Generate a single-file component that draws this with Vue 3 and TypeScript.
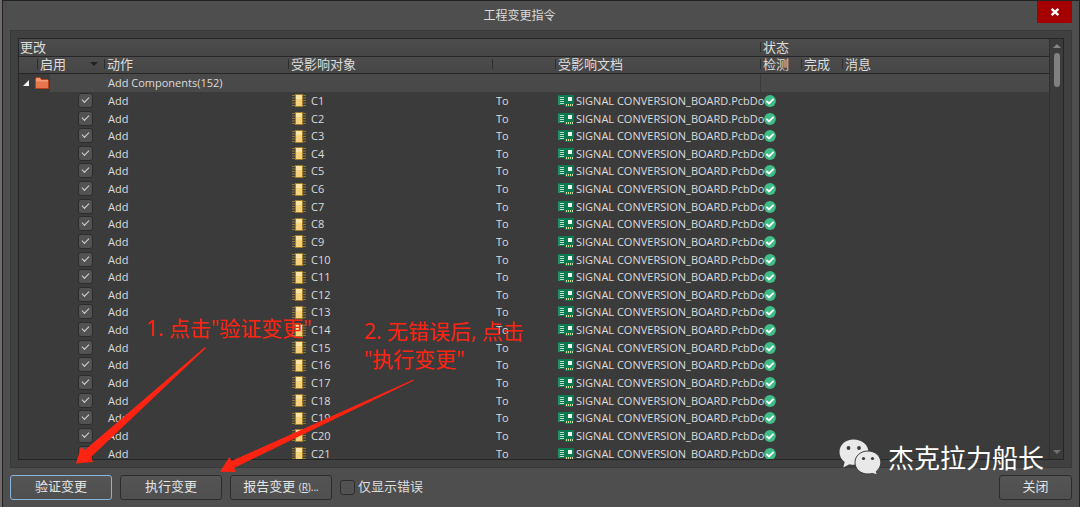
<script setup lang="ts">
import { ref } from 'vue'

interface Change {
  id: string
  enabled: boolean
}

const documentName = 'SIGNAL CONVERSION_BOARD.PcbDo'
const changes = ref<Change[]>(
  Array.from({ length: 21 }, (_, i) => ({ id: `C${i + 1}`, enabled: true })),
)
const errorsOnly = ref(false)
</script>

<template>
  <div class="dialog">
    <header class="titlebar">
      <h1>工程变更指令</h1>
      <button class="close" type="button" aria-label="Close">
        <svg width="10" height="10" viewBox="0 0 10 10"><path d="M1.6 1.8 8.4 8.2M8.4 1.8 1.6 8.2" stroke="#fff" stroke-width="2.4" /></svg>
      </button>
    </header>

    <main class="panel">
      <div class="list">
        <div class="rows">
          <table>
            <colgroup>
              <col class="c-enable" /><col class="c-action" /><col class="c-object" /><col class="c-to" />
              <col class="c-doc" /><col class="c-flag" /><col class="c-flag" /><col />
            </colgroup>
            <thead>
              <tr class="bands">
                <th colspan="5" scope="colgroup">更改</th>
                <th colspan="3" scope="colgroup"><span class="sep">状态</span></th>
              </tr>
              <tr class="heads">
                <th scope="col" class="enable">
                  <div class="sort">
                    <span class="sep">启用</span>
                    <svg width="8" height="4" viewBox="0 0 8 4"><path d="M0 0H8L4 4Z" fill="#222" /></svg>
                  </div>
                </th>
                <th scope="col"><span class="sep">动作</span></th>
                <th scope="col"><span class="sep">受影响对象</span></th>
                <th><span class="sep"></span></th>
                <th scope="col"><span class="sep">受影响文档</span></th>
                <th scope="col"><span class="sep">检测</span></th>
                <th scope="col"><span class="sep">完成</span></th>
                <th scope="col"><span class="sep">消息</span></th>
              </tr>
            </thead>
            <tbody>
              <tr class="group">
                <td class="tree">
                  <div class="node">
                    <svg width="6" height="6" viewBox="0 0 6 6"><path d="M6 0V6H0Z" fill="#f4f4f4" /></svg>
                    <svg width="14" height="12" viewBox="0 0 14 12">
                      <path d="M.5 11.5V1.5L1.5.5H5L6.5 2.5H12.5L13.5 3.5V11.5Z" fill="#e8764c" stroke="#b8401c" />
                      <path d="M1 4.500H13V3H6L4.800 1H2L1 2Z" fill="#f39a74" />
                    </svg>
                  </div>
                </td>
                <td colspan="4">Add Components(152)</td>
                <td class="line"></td>
                <td></td>
                <td></td>
              </tr>
              <tr v-for="change in changes" :key="change.id">
                <td class="tick"><input v-model="change.enabled" type="checkbox" :aria-label="change.id" /></td>
                <td>Add</td>
                <td>
                  <div class="item">
                    <svg width="14" height="13" viewBox="0 0 14 13">
                      <path d="M0 1.500H14M0 4H14M0 6.500H14M0 9H14M0 11.500H14" stroke="#8f7836" />
                      <rect x="3.500" y=".5" width="7" height="12" fill="#f6d27c" stroke="#a07c2c" />
                      <rect x="4" y="1" width="6" height="4" fill="#fbe3a6" />
                    </svg>
                    <span>{{ change.id }}</span>
                  </div>
                </td>
                <td>To</td>
                <td class="target">
                  <div class="item doc">
                    <svg width="16" height="12" viewBox="0 0 16 12">
                      <path d="M0 0H16V9H15V12H7V10H0Z" fill="#0b7a50" />
                      <path d="M1 1V10" stroke="#35a87a" />
                      <path d="M2 2.500H6M2 4.500H6M2 6.500H6M2 8.500H6" stroke="#b9dccb" />
                      <rect x="10" y="2" width="4" height="4" fill="#f0f5f1" />
                      <path d="M8.500 9V11M10.500 9V11M12.500 9V11M14.500 9V11" stroke="#d9dca0" />
                    </svg>
                    <span>{{ documentName }}</span>
                  </div>
                </td>
                <td class="status">
                  <svg width="12" height="12" viewBox="0 0 12 12">
                    <circle cx="6" cy="6" r="5.900" fill="#3fbd87" />
                    <path d="M2.400 6 5 8.400 9.600 3.800" fill="none" stroke="#fff" stroke-width="1.800" />
                  </svg>
                </td>
                <td></td>
                <td></td>
              </tr>
            </tbody>
          </table>
        </div>
        <div class="scroll">
          <svg width="8" height="4" viewBox="0 0 8 4"><path d="M0 4H8L4 0Z" fill="#858585" /></svg>
          <div class="thumb"></div>
          <svg width="8" height="4" viewBox="0 0 8 4"><path d="M0 0H8L4 4Z" fill="#707070" /></svg>
        </div>
      </div>
    </main>

    <footer class="actions">
      <button class="btn primary" type="button">验证变更</button>
      <button class="btn" type="button">执行变更</button>
      <button class="btn" type="button">报告变更 <small>(<u>R</u>)...</small></button>
      <label class="only"><input v-model="errorsOnly" type="checkbox" /><span>仅显示错误</span></label>
      <button class="btn end" type="button">关闭</button>
    </footer>

    <svg class="arrows" width="430" height="490" viewBox="0 0 430 490">
      <path d="M205 347 206 348 91 457 93 462 76 463.500 81 447 85 450Z" fill="#ff2412" />
      <path d="M413.500 379.500 414 380.500 234 468 236 472 220 471.700 229.300 457 231.500 461Z" fill="#ff2412" />
    </svg>
    <p class="note first">1. 点击"验证变更"</p>
    <p class="note second">2. 无错误后, 点击<br />"执行变更"</p>

    <div class="watermark">
      <svg width="42" height="36" viewBox="0 0 42 36">
        <path d="M14.500.5C6.500.5.5 5.800.5 13c0 4.200 2 7.500 5.200 10L4.300 28.500 10.400 25.200c1.400.4 3 .5 4.600.5 8 0 14.500-5.200 14.500-12.600S22.500.5 14.500.5Z" fill="#e9e9e9" />
        <path d="M29 12C21.500 12 16 17 16 23.500S21.500 35 29 35c1.500 0 3-.2 4.200-.6L38.500 36 37.300 32.300C40.200 30 41.800 27 41.800 23.500 41.800 17 36.300 12 29 12Z" fill="#e9e9e9" stroke="#3c3c3c" />
        <g fill="#3c3c3c"><circle cx="9.500" cy="9" r="1.900" /><circle cx="20" cy="9" r="1.900" /><circle cx="24.500" cy="19.500" r="1.600" /><circle cx="33.500" cy="19.500" r="1.600" /></g>
      </svg>
      <span>杰克拉力船长</span>
    </div>
  </div>
</template>

<style>
body {
  margin: 0;
  background: #4e4e4e;
}
</style>

<style scoped>
.dialog {
  position: relative;
  box-sizing: border-box;
  display: flex;
  flex-direction: column;
  min-height: 100vh;
  padding: 0 7px 8px 7px;
  border: 1px solid #222;
  border-width: 1px 1px 0 1px;
  margin-left: 2px;
  background: #4e4e4e;
  box-shadow: -2px 0 #716b6c;
  color: #dcdcdc;
  font: 11px/16px "Open Sans", "Noto Sans CJK SC", sans-serif;
}
.titlebar {
  display: grid;
  grid-template-columns: 1fr 35px;
  gap: 8px;
  height: 29px;
}
h1 {
  margin: 0;
  font-size: 12px;
  font-weight: 400;
  line-height: 29px;
  text-align: center;
}
.close {
  display: flex;
  align-items: center;
  justify-content: center;
  height: 22px;
  padding: 0;
  border: 0;
  background: #a50000;
}
.panel {
  padding: 7px;
  border: 1px solid #393939;
  background: #404040;
}
.list {
  display: flex;
  border: 1px solid #262626;
  background: #3b3b3b;
}
.rows {
  flex: 1;
  min-width: 0;
  height: 420px;
  overflow: hidden;
}
table {
  width: 100%;
  height: 423px;
  table-layout: fixed;
  border-collapse: separate;
  border-spacing: 0;
}
.c-enable { width: 85px; }
.c-action { width: 184px; }
.c-object { width: 204px; }
.c-to { width: 63px; }
.c-doc { width: 205px; }
.c-flag { width: 41px; }
th,
td {
  padding: 0;
  text-align: left;
  font-weight: 400;
  white-space: nowrap;
}
th {
  box-sizing: border-box;
  height: 18px;
  padding-bottom: 2px;
  border-bottom: 1px solid #262626;
  background: linear-gradient(#4c4c4c, #464646);
  font-size: 13px;
  line-height: 14px;
}
.heads th { height: 17px; }
.bands th:first-child { padding-left: 1px; }
.sep {
  display: block;
  height: 10px;
  padding-left: 2px;
  border-left: 1px solid #2e2e2e;
  line-height: 10px;
}
.enable { padding-left: 18px; }
.sort {
  display: flex;
  align-items: center;
  justify-content: space-between;
  padding-right: 6px;
}
td {
  padding: 1px 0 0 4px;
  line-height: 16px;
}
.group td { background: #494949; }
.group .tree {
  padding: 0;
  background: linear-gradient(90deg, #3b3b3b 31px, #494949 31px);
}
.group .line { border-left: 1px solid #3a3a3a; }
.node {
  display: flex;
  align-items: center;
  gap: 6px;
  padding-left: 4px;
}
.tick { padding: 0 0 0 59px; }
input {
  appearance: none;
  box-sizing: border-box;
  display: block;
  width: 15px;
  height: 15px;
  margin: 0;
  border: 1px solid #2c2c2c;
  border-radius: 3px;
  background: #525252;
}
input:checked::before {
  content: "";
  display: block;
  width: 6px;
  height: 3px;
  margin: 3px 0 0 3px;
  border: solid #d4d4d4;
  border-width: 0 0 1px 1px;
  transform: rotate(-45deg);
}
.item {
  display: flex;
  align-items: center;
  gap: 5px;
}
.item svg { flex: none; }
.target { padding-left: 3px; }
.doc { gap: 2px; }
.status svg { display: block; }
.scroll {
  display: flex;
  flex-direction: column;
  align-items: center;
  width: 13px;
  padding: 5px 0;
  border-left: 1px solid #303030;
}
.thumb {
  width: 6px;
  height: 34px;
  margin: 5px 0 auto;
  border-radius: 3px;
  background: #808080;
}
.actions {
  display: flex;
  align-items: center;
  gap: 8px;
  margin-top: 7px;
}
.btn {
  box-sizing: border-box;
  width: 102px;
  height: 25px;
  padding: 0 0 3px;
  border: 1px solid #2c2c2c;
  border-radius: 3px;
  background: linear-gradient(#555, #4f4f4f);
  color: #e4e4e4;
  font: 13px/20px "Open Sans", "Noto Sans CJK SC", sans-serif;
}
.btn small { font-size: 10px; }
.primary { border-color: #8ab4dc; }
.end {
  width: 73px;
  margin-left: auto;
}
.only {
  display: flex;
  align-items: center;
  gap: 3px;
  font-size: 13px;
}
.only span { padding-bottom: 3px; }
.arrows {
  position: absolute;
  top: -1px;
  left: -3px;
  pointer-events: none;
}
.note {
  position: absolute;
  margin: 0;
  color: #ff2412;
  font: 21px/28px "Open Sans", "Noto Sans CJK SC", sans-serif;
  white-space: nowrap;
  pointer-events: none;
}
.first { top: 313px; left: 143px; }
.second { top: 316px; left: 361px; }
.watermark {
  position: absolute;
  right: 35px;
  bottom: 33px;
  display: flex;
  align-items: center;
  gap: 7px;
  color: #fff;
  font: 26px/36px "Noto Sans CJK SC", sans-serif;
  pointer-events: none;
}
</style>
